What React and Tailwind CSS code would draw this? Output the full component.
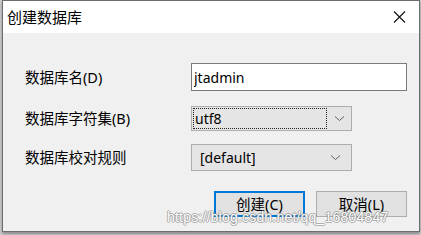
import { useState } from "react";

const font = { fontFamily: '"Noto Sans", "Noto Sans CJK SC", sans-serif' };

function Chevron() {
    return (
        <svg width="11" height="7" viewBox="0 0 11 7" className="shrink-0">
            <path d="M1 1.5 L5.5 5.5 L10 1.5" fill="none" stroke="#5f5f5f" strokeWidth="1" />
        </svg>
    );
}

function App() {
    const [name, setName] = useState("jtadmin");

    return (
        <div className="w-[421px] h-[235px] bg-[#cfcfcf] relative overflow-hidden" style={font}>
            <div className="ml-[2px] w-[418px] h-[232px] border border-[#6d6d6d] bg-[#f0f0f0] flex flex-col shadow-[0_2px_3px_rgba(0,0,0,0.35)]">
                {/* title bar */}
                <div className="h-[32px] bg-white flex items-center justify-between pl-[4px] pr-[13px]">
                    <span className="text-[15px] text-black leading-none">创建数据库</span>
                    <svg width="13" height="12" viewBox="0 0 13 12">
                        <path d="M1 0.5 L12 11.5 M12 0.5 L1 11.5" stroke="#111" strokeWidth="1.1" />
                    </svg>
                </div>

                {/* body */}
                <div className="flex flex-col pl-[22px] pt-[30px] text-[14.5px] text-black">
                    <div className="flex items-center h-[28px]">
                        <span className="w-[166px] leading-none">数据库名(D)</span>
                        <input
                            value={name}
                            onChange={(e) => setName(e.target.value)}
                            className="w-[216px] h-[28px] border border-[#7a7a7a] bg-white px-[2px] text-[14px] outline-none"
                        />
                    </div>

                    <div className="flex items-center h-[25px] mt-[15px]">
                        <span className="w-[166px] leading-none">数据库字符集(B)</span>
                        <div className="w-[161px] h-[25px] border border-[#adadad] bg-[#e5e5e5] flex items-center p-[1px]">
                            <div className="w-[134px] h-full border border-dotted border-[#222] flex items-center px-[1px] text-[14px] leading-none">
                                utf8
                            </div>
                            <div className="flex-1 flex justify-center pl-[2px]">
                                <Chevron />
                            </div>
                        </div>
                    </div>

                    <div className="flex items-center h-[27px] mt-[13px]">
                        <span className="w-[166px] leading-none">数据库校对规则</span>
                        <div className="w-[161px] h-[27px] border border-[#adadad] bg-[#e5e5e5] flex items-center justify-between pl-[8px] pr-[10px]">
                            <span className="text-[14px] leading-none">[default]</span>
                            <Chevron />
                        </div>
                    </div>

                    <div className="flex justify-end gap-[11px] mt-[20px] pr-[12px]">
                        <button className="w-[91px] h-[26px] border-2 border-[#0078d7] bg-[#e1e1e1] text-[14.5px] leading-none">
                            创建(C)
                        </button>
                        <button className="w-[91px] h-[26px] border border-[#adadad] bg-[#e1e1e1] text-[14.5px] leading-none">
                            取消(L)
                        </button>
                    </div>
                </div>
            </div>

            {/* watermark */}
            <div
                className="absolute left-[167px] top-[207px] text-[14px] text-white tracking-[0.2px] pointer-events-none"
                style={{
                    fontFamily: '"Liberation Sans", Arial, sans-serif',
                    textShadow:
                        "1px 0 0 rgba(120,120,120,0.55), -1px 0 0 rgba(120,120,120,0.55), 0 1px 0 rgba(120,120,120,0.55), 0 -1px 0 rgba(120,120,120,0.55)",
                }}
            >
                https://blog.csdn.net/qq_16804847
            </div>
        </div>
    );
}

export default App;
